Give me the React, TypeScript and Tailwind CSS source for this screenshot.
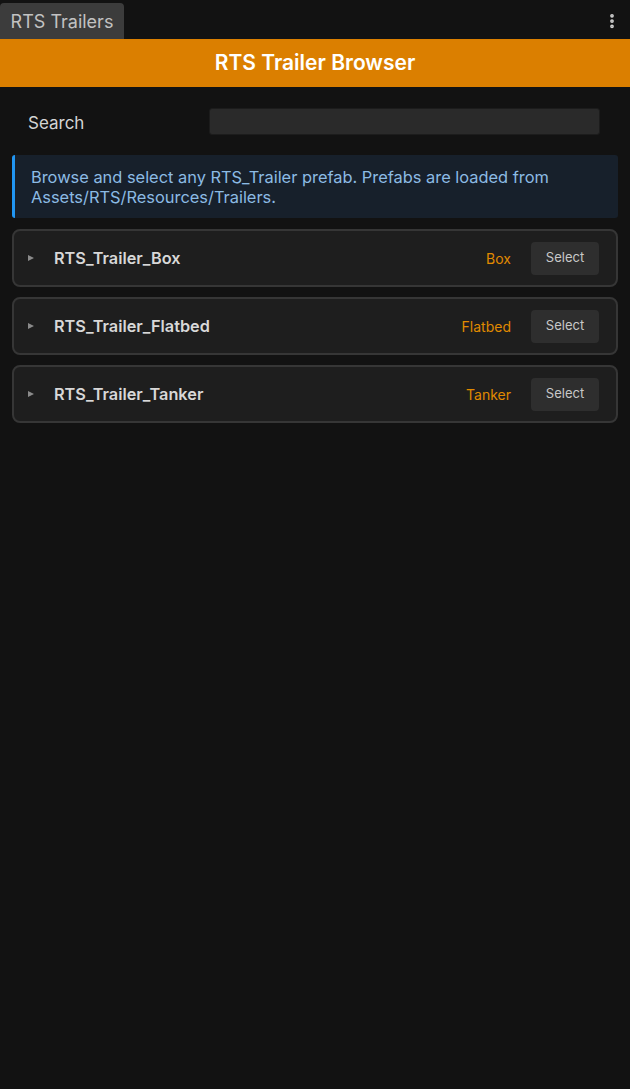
import { MoreVertical } from 'lucide-react';

// ─── Data ─────────────────────────────────────────────────────────
interface Trailer {
  name: string;
  kind: string;
}

const trailers: Trailer[] = [
  { name: 'RTS_Trailer_Box', kind: 'Box' },
  { name: 'RTS_Trailer_Flatbed', kind: 'Flatbed' },
  { name: 'RTS_Trailer_Tanker', kind: 'Tanker' },
];

export default function App() {
  return (
    <div className="min-h-[1089px] bg-[#121212] font-['Inter',sans-serif]">
      {/* Tab strip */}
      <div className="flex items-end justify-between h-[39px]">
        <div className="h-[36px] w-[124px] bg-[#3c3c3c] rounded-t-[4px] flex items-center justify-center text-[18px] text-[#c2c2c2]">
          RTS Trailers
        </div>
        <MoreVertical size={18} strokeWidth={3} className="text-[#d0d0d0] mb-[9px] mr-[9px]" />
      </div>

      {/* Header */}
      <div className="h-[48px] bg-[#db7f00] flex items-center justify-center">
        <h1 className="text-[21px] font-semibold text-white">RTS Trailer Browser</h1>
      </div>

      {/* Search */}
      <div className="flex items-center pl-[28px] pr-[30px] pt-[21px]">
        <label className="w-[181px] mt-[2px] text-[17px] leading-[20px] text-[#d4d4d4]">Search</label>
        <input
          type="text"
          className="flex-1 h-[27px] bg-[#2a2a2a] border border-[#1c1c1c] rounded-[3px] px-2 text-sm text-white focus:outline-none"
        />
      </div>

      <div className="px-[12px] pt-[20px]">
        {/* Info */}
        <div className="mb-[11px] bg-[#17202b] border-l-[3px] border-[#2196f3] rounded-[3px] pl-[16px] pr-3 pt-[12px] pb-[11px] text-[16.4px] leading-[20px] text-[#8cbbe4]">
          Browse and select any RTS_Trailer prefab. Prefabs are loaded from Assets/RTS/Resources/Trailers.
        </div>

        {/* Trailer list */}
        <div className="space-y-[10px]">
          {trailers.map((t) => (
            <div
              key={t.name}
              className="h-[58px] bg-[#1e1e1e] border-2 border-[#363636] rounded-[8px] flex items-center pl-[14px] pr-[17px]"
            >
              <svg width="6" height="6" viewBox="0 0 6 6" className="text-[#8a8a8a] mr-[20px]">
                <path d="M0 0 L6 3 L0 6 Z" fill="currentColor" />
              </svg>
              <span className="flex-1 text-[16.3px] font-semibold text-[#d8d8d8]">{t.name}</span>
              <span className="text-[14px] text-[#e08a00] mr-[20px]">{t.kind}</span>
              <button className="h-[33px] w-[68px] bg-[#2e2e2e] rounded-[4px] text-[13px] text-[#c8c8c8]">
                Select
              </button>
            </div>
          ))}
        </div>
      </div>
    </div>
  );
}
